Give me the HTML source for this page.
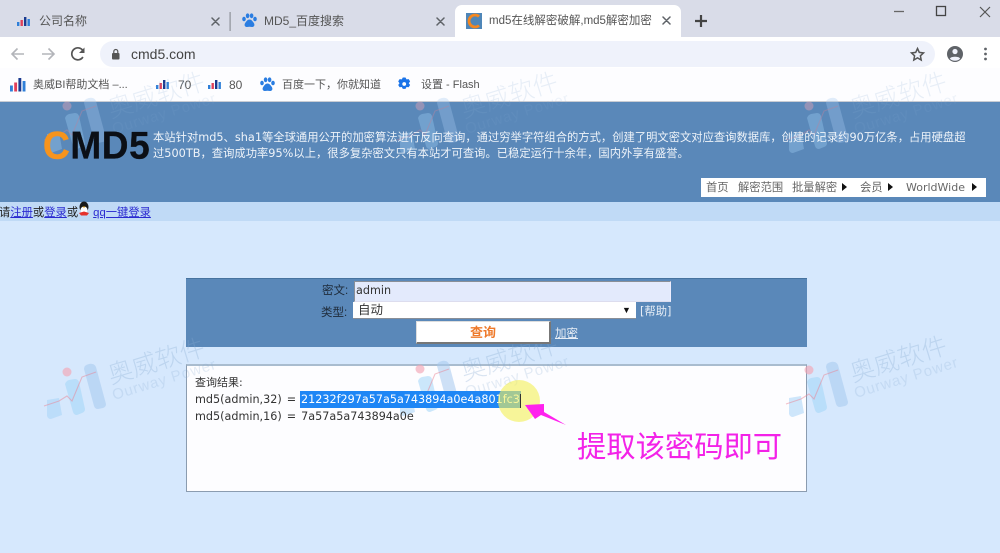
<!DOCTYPE html>
<html lang="zh">
<head>
<meta charset="utf-8">
<title>md5在线解密破解,md5解密加密</title>
<style>
html,body{margin:0;padding:0;width:1000px;height:553px;overflow:hidden;background:#d6e8fd}
body{position:relative;font-family:"Liberation Sans","Noto Sans CJK SC",sans-serif;color:#333}
#w{position:absolute;left:0;top:0;width:1000px;height:553px;overflow:hidden;filter:blur(.35px)}
.a{position:absolute;white-space:nowrap}
svg{position:absolute;overflow:visible}
.t{font-size:12px;color:#555;line-height:16px}
.b{font-size:11.5px;color:#555;line-height:16px}
.d{font-family:"DejaVu Sans","Noto Sans CJK SC",sans-serif}
.intro{font-size:11.3px;color:#eef3f9;line-height:15.5px}
.nav{font-size:11px;color:#666;line-height:16px}
.r{font-size:11.2px;color:#333;line-height:16px}
.tri{position:absolute;width:0;height:0;border-left:5px solid #111;border-top:4px solid transparent;border-bottom:4px solid transparent}
a{color:#2a2ad0;text-decoration:underline}
</style>
</head>
<body>
<div id="w">
<!-- browser chrome -->
<div class="a" style="left:0;top:0;width:1000px;height:37px;background:#d9dce8"></div>
<div class="a" style="left:0;top:37px;width:1000px;height:31px;background:#fff"></div>
<div class="a" style="left:0;top:68px;width:1000px;height:33px;background:#fdfdff"></div>
<div class="a" style="left:455px;top:5px;width:226px;height:33px;background:#fff;border-radius:7px 7px 0 0"></div>
<div class="a" style="left:100px;top:41px;width:835px;height:26px;background:#eff2fb;border-radius:13px"></div>

<svg style="left:0;top:0" width="1000" height="100" viewBox="0 0 1000 100">
 <defs>
  <g id="bars">
   <rect x="0" y="5" width="2.400" height="4" fill="#2f7fd8"/><rect x="3.500" y="3" width="2.400" height="6" fill="#e0405a"/><rect x="7" y="0" width="2.400" height="9" fill="#1b3a8f"/><rect x="10.500" y="2" width="2.400" height="7" fill="#2f7fd8"/>
  </g>
  <g id="paw" fill="#2a7de1">
   <ellipse cx="3" cy="6" rx="1.800" ry="2.300"/><ellipse cx="6.600" cy="2.800" rx="1.800" ry="2.400"/><ellipse cx="10.600" cy="2.800" rx="1.800" ry="2.400"/><ellipse cx="14" cy="6" rx="1.800" ry="2.300"/>
   <path d="M8.500 6.500c2 0 3 1.700 4 3 1.200 1.400 1.500 4-1 4.500-1 .2-2-.3-3-.3s-2 .5-3 .3c-2.500-.5-2.200-3.100-1-4.500 1-1.300 2-3 4-3z"/>
  </g>
 </defs>
 <use href="#bars" x="17" y="17"/>
 <g stroke="#5f6368" stroke-width="1.500" fill="none" stroke-linecap="round">
  <path d="M212 18l7 7M219 18l-7 7M437 18l7 7M444 18l-7 7M663 17l7 7M670 17l-7 7"/>
 </g>
 <rect x="229.500" y="12" width="1.200" height="19" fill="#8d9199"/>
 <use href="#paw" x="241" y="13"/>
 <rect x="466" y="13" width="16" height="16" fill="#4f86b8"/>
 <path d="M479 16.500a6 6 0 1 0 0 9" stroke="#f5871f" stroke-width="2.800" fill="none"/>
 <path d="M701 15v12M695 21h12" stroke="#444" stroke-width="2.200"/>
 <path d="M894 11.500h10" stroke="#666" stroke-width="1.300"/>
 <rect x="936.500" y="6.500" width="9" height="9" fill="none" stroke="#444" stroke-width="1.300"/>
 <path d="M980 7l10 10M990 7l-10 10" stroke="#555" stroke-width="1.200"/>
 <!-- nav -->
 <path d="M24 54H12M17.500 48.500L12 54l5.500 5.500" stroke="#b3b5ba" stroke-width="1.600" fill="none"/>
 <path d="M42 54h12M48.500 48.500L54 54l-5.500 5.500" stroke="#b3b5ba" stroke-width="1.600" fill="none"/>
 <path d="M83.500 52a6 6 0 1 0-.6 5" stroke="#555" stroke-width="1.700" fill="none"/>
 <path d="M84.500 47.500v5.500h-5.500z" fill="#555"/>
 <rect x="112" y="53" width="7.500" height="6.500" rx="1" fill="#555"/>
 <path d="M113.800 53v-1.500a2 2 0 0 1 4 0V53" stroke="#555" stroke-width="1.200" fill="none"/>
 <path d="M917.500 48.500l1.800 3.900 4.200.5-3.100 2.900.8 4.200-3.700-2.100-3.700 2.100.8-4.200-3.100-2.900 4.200-.5z" fill="none" stroke="#555" stroke-width="1.500"/>
 <circle cx="955" cy="54" r="8" fill="#5f6368"/>
 <circle cx="955" cy="51.500" r="2.600" fill="#eff2fb"/>
 <path d="M949.800 58.500c1.500-2.300 8.900-2.300 10.400 0-1.400 1.700-3.200 2.300-5.200 2.300s-3.800-.6-5.200-2.300z" fill="#eff2fb"/>
 <g fill="#5f6368"><circle cx="985.500" cy="49" r="1.400"/><circle cx="985.500" cy="54" r="1.400"/><circle cx="985.500" cy="59" r="1.400"/></g>
 <!-- bookmarks -->
 <g transform="translate(10,78) scale(1.200,1.500)"><use href="#bars"/></g>
 <use href="#bars" x="156" y="80"/>
 <use href="#bars" x="208" y="80"/>
 <use href="#paw" x="259" y="77"/>
 <path d="M405.500 77.500l1 1.900 2.200-.3 1.400 2.300-1.300 1.800 1.300 1.800-1.400 2.300-2.200-.3-1 1.900h-2.700l-1-1.900-2.200.3-1.400-2.300 1.300-1.800-1.300-1.800 1.400-2.300 2.200.3 1-1.900z" fill="#1a73e8"/>
 <circle cx="404.200" cy="84" r="1.900" fill="#fff"/>
</svg>
<div class="a t" style="left:39px;top:13px">公司名称</div>
<div class="a t" style="left:264px;top:13px">MD5_百度搜索</div>
<div class="a t" style="left:489px;top:13px;font-size:11.5px">md5在线解密破解,md5解密加密</div>
<div class="a" style="left:131px;top:45px;font-size:14px;line-height:18px;color:#444">cmd5.com</div>
<div class="a b" style="left:33px;top:77px;font-size:11px">奥威BI帮助文档 –...</div>
<div class="a b" style="left:178px;top:77px;font-size:12px">70</div>
<div class="a b" style="left:229px;top:77px;font-size:12px">80</div>
<div class="a b" style="left:282px;top:77px;font-size:11px">百度一下，你就知道</div>
<div class="a b" style="left:421px;top:77px;font-size:11px">设置 - Flash</div>

<!-- header -->
<div class="a" style="left:0;top:101px;width:1000px;height:101px;background:#5a88b9;border-top:1px solid #c9ccd3;box-sizing:border-box"></div>
<div class="a" style="left:0;top:202px;width:1000px;height:19px;background:#c0daf6"></div>

<!-- form panel -->
<div class="a" style="left:186px;top:278px;width:621px;height:69px;background:#5a88b9;box-sizing:border-box;border-top:1px solid #47739f"></div>
<!-- result panel -->
<div class="a" style="left:186px;top:364px;width:621px;height:128px;background:#fdfdff;box-sizing:border-box;border:1px solid #8b9cb0;border-top:2px solid #a9bccf"></div>

<!-- watermarks -->
<svg style="left:0;top:0" width="1000" height="553" viewBox="0 0 1000 553">
 <defs>
  <g id="wm">
   <path d="M47 400l12-2 3 17-11 4q-3 0-4-3z" fill="#a8d4f8" opacity=".55"/>
   <path d="M65 384q1-3 4-4l6-1q3 0 4 3l6 27q0 3-3 4l-5 2q-3 0-4-3z" fill="#a2d6f8" opacity=".55"/>
   <path d="M84 369q0-4 5-5 5-1 7 3l10 37q0 3-3 4l-5 1q-3 0-4-3z" fill="#a6c8ee" opacity=".55"/>
   <circle cx="67" cy="372" r="4.500" fill="#f2a6b6" opacity=".65"/>
   <path d="M44 406l15-5 8-5 5 5 10-24 14-5" stroke="#ea8494" stroke-width="1.100" fill="none" opacity=".5"/>
   <text transform="translate(111,384) rotate(-17)" font-size="25" fill="#86aad2" opacity=".3" font-family="'Noto Sans CJK SC',sans-serif" font-weight="300">奥威软件</text>
   <text transform="translate(114,400) rotate(-17)" font-size="15" fill="#86aad2" opacity=".22" font-family="'Liberation Sans',sans-serif" letter-spacing=".8">Ourway Power</text>
  </g>
 </defs>
 <use href="#wm" x="0" y="0"/>
 <use href="#wm" x="353" y="-3"/>
 <use href="#wm" x="742" y="-2"/>
 <g opacity=".6">
  <use href="#wm" x="0" y="-266"/>
  <use href="#wm" x="353" y="-266"/>
  <use href="#wm" x="742" y="-266"/>
 </g>
</svg>

<div class="a" style="left:43px;top:124px;font:bold 37px/44px 'Liberation Sans',sans-serif;color:#0b0f16;letter-spacing:.6px;transform:scaleY(1.06);transform-origin:0 50%;-webkit-text-stroke:.3px #0b0f16"><span style="color:#f7941d;-webkit-text-stroke:.5px #f7941d">C</span>MD5</div>
<div class="a intro d" style="left:153px;top:130px">本站针对md5、sha1等全球通用公开的加密算法进行反向查询，通过穷举字符组合的方式，创建了明文密文对应查询数据库，创建的记录约90万亿条，占用硬盘超<br>过500TB，查询成功率95%以上，很多复杂密文只有本站才可查询。已稳定运行十余年，国内外享有盛誉。</div>
<div class="a" style="left:701px;top:178px;width:285px;height:19px;background:#fff"></div>
<div class="a nav d" style="left:706px;top:180px;font-size:11.3px">首页</div>
<div class="a nav d" style="left:738px;top:180px;font-size:11.3px">解密范围</div>
<div class="a nav d" style="left:792px;top:180px;font-size:11.3px">批量解密</div><div class="tri" style="left:842px;top:183px"></div>
<div class="a nav d" style="left:860px;top:180px;font-size:11.3px">会员</div><div class="tri" style="left:888px;top:183px"></div>
<div class="a nav d" style="left:906px;top:180px">WorldWide</div><div class="tri" style="left:972px;top:183px"></div>
<div class="a" style="left:-1px;top:205px;font-size:11.3px;line-height:16px;color:#222">请<a>注册</a>或<a>登录</a>或<span style="display:inline-block;width:15px"></span><a>qq一键登录</a></div>
<svg style="left:77px;top:201px" width="14" height="16" viewBox="0 0 14 16">
 <ellipse cx="7" cy="6" rx="4.500" ry="5.500" fill="#1a1a1a"/>
 <ellipse cx="7" cy="9" rx="3.500" ry="3.500" fill="#fff"/>
 <path d="M2 12l5-1.500L12 12l-2 2.500H4z" fill="#e5322d"/>
 <path d="M5.500 5.500l3 0-1.500 1.500z" fill="#f5b01e"/>
</svg>

<div class="a" style="left:322px;top:283px;font-size:11.5px;line-height:16px;color:#1e2b3a">密文:</div>
<div class="a d" style="left:354px;top:281px;width:317px;height:21px;background:#e3eafc;box-sizing:border-box;border:1px solid;border-color:#8a8f97 #eef #dde #8a8f97;padding-left:1px;font-size:11.2px;line-height:18px;color:#333">admin</div>
<div class="a" style="left:321px;top:305px;font-size:11.5px;line-height:16px;color:#1e2b3a">类型:</div>
<div class="a" style="left:353px;top:302px;width:283px;height:17px;background:#fff;box-sizing:border-box;border-bottom:1px solid #8a8f97;padding-left:5px;font-size:12.5px;line-height:17px;color:#333">自动</div>
<div class="a" style="left:622px;top:304px;font-size:9px;line-height:12px;color:#111">▼</div>
<div class="a d" style="left:640px;top:304px;font-size:11.3px;line-height:16px;color:#e8eef6">[帮助]</div>
<div class="a" style="left:416px;top:321px;width:135px;height:23px;background:#fff;box-sizing:border-box;border:1px solid #ddd;border-right:2px solid #777;border-bottom:2px solid #777;text-align:center;font-size:13px;font-weight:bold;line-height:22px;color:#ee7a2b">查询</div>
<div class="a" style="left:555px;top:326px;font-size:11.5px;line-height:16px;color:#e8eef6;text-decoration:underline">加密</div>

<div class="a r d" style="left:195px;top:375px;font-size:11px">查询结果:</div>
<div class="a r d" style="left:195px;top:392px;word-spacing:1.5px">md5(admin,32) =</div>
<div class="a" style="left:300px;top:391px;width:221px;height:17px;background:#1e86f5"></div>
<div class="a r d" style="left:301px;top:392px;color:#fff">21232f297a57a5a743894a0e4a801fc3</div>
<div class="a r d" style="left:195px;top:409px;word-spacing:1.5px">md5(admin,16) = 7a57a5a743894a0e</div>
<div class="a" style="left:498px;top:380px;width:42px;height:42px;border-radius:50%;background:rgba(244,240,90,.62)"></div>
<div class="a" style="left:520px;top:394px;width:1px;height:14px;background:#333"></div>

<!-- annotation -->
<svg style="left:0;top:0" width="1000" height="553" viewBox="0 0 1000 553">
 <path d="M525 405L544 404 544 412 566 425 541 415 535 419z" fill="#ff22ee"/>
</svg>
<div class="a" style="left:577px;top:428px;font-size:29.3px;line-height:34px;color:#f322e8;font-family:'Noto Sans CJK SC',sans-serif;font-weight:400">提取该密码即可</div>
</div>
</body>
</html>
